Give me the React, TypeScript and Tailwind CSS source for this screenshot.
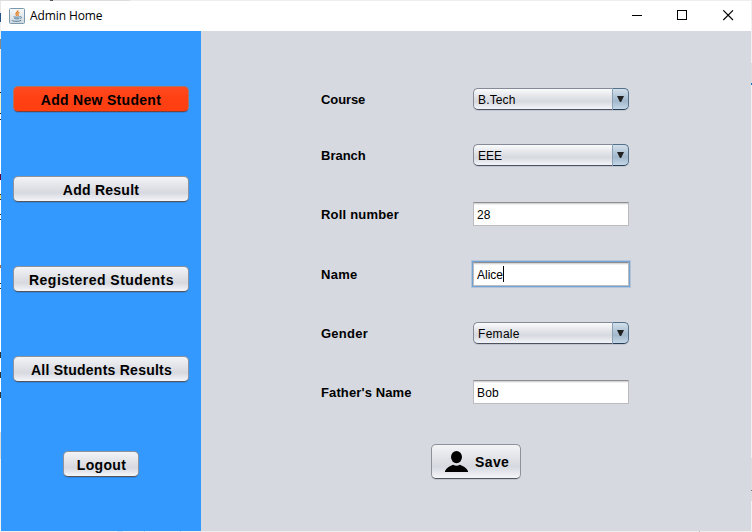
import React from "react";

type NavButton = { label: string; tracking: string; place: string; active?: boolean };

const NAV: NavButton[] = [
  { label: "Add New Student", tracking: "tracking-[0.3px]", place: "mt-[55px] w-44", active: true },
  { label: "Add Result", tracking: "tracking-[0.25px]", place: "mt-16 w-44" },
  { label: "Registered Students", tracking: "tracking-[0.46px] pl-px", place: "mt-16 w-44" },
  { label: "All Students Results", tracking: "tracking-[0.25px] pl-px", place: "mt-16 w-44" },
  { label: "Logout", tracking: "tracking-[0.35px] pl-px", place: "mt-[69px] w-[76px]" },
];

const SILVER =
  "bg-[linear-gradient(to_bottom,#f3f4f6_0%,#e6e8ec_28%,#dbdde3_55%,#d6d9df_66%,#e4e6ec_82%,#f5f6f9_100%)] border-[#8f9299] border-b-[#54565c]";
const ORANGE =
  "bg-[linear-gradient(to_bottom,#ff4a1f_0%,#ff4013_50%,#ff3f10_100%)] border-[#b0735f] border-b-[#7e4036]";

function JavaIcon() {
  return (
    <svg width="16" height="16" viewBox="0 0 16 16" fill="none">
      <defs>
        <linearGradient id="tile" x1="0" y1="0" x2="0" y2="1">
          <stop offset="0" stopColor="#f8fafb" />
          <stop offset="1" stopColor="#cfd8df" />
        </linearGradient>
      </defs>
      <rect x="0.5" y="0.5" width="15" height="15" rx="1" fill="url(#tile)" stroke="#7b98ad" />
      <path d="M8.8 2.2c.7 1.8-3.2 2.6-1.6 4.6l.6 1M10.4 4.4c-2 .8-2.1 1.6-1.2 2.5.3.5 0 .8-.4 1.1" stroke="#e5812b" strokeWidth="1.3" />
      <path d="M4.6 8.8c1.4.5 4.8.5 6.2 0M5.3 10.5c1.2.5 3.8.5 5 0M11 8.8c2.2-.5 1.6 1.5.2 1.9M3.3 12c-.5.7.6 1 1.4 1.1 2.5.4 6.1.2 7.5-.8" stroke="#527d9d" strokeWidth="1" />
    </svg>
  );
}

function TitleBar() {
  return (
    <header className="flex h-[30px] items-center bg-white pl-2 pr-[17px]">
      <JavaIcon />
      <span className="ml-[5px] font-['Open_Sans','Noto_Sans',sans-serif] text-[12px] leading-[30px] tracking-[-0.1px]">Admin Home</span>
      <svg className="ml-auto" width="102" height="12" viewBox="0 0 102 12" fill="none" stroke="#000" shapeRendering="crispEdges">
        <path d="M0 5.5H10" />
        <rect x="45.5" y="0.5" width="9" height="9" />
        <path d="M91.3 .3L101 10M101 .3L91.3 10" shapeRendering="auto" strokeWidth="1.1" />
      </svg>
    </header>
  );
}

function Sidebar() {
  return (
    <nav className="flex w-[200px] shrink-0 flex-col items-center bg-[#3399ff]">
      {NAV.map((b) => (
        <button
          key={b.label}
          className={`flex h-[26px] items-center justify-center rounded-[5px] border pt-px text-[14px] font-bold leading-none whitespace-nowrap shadow-[0_1px_0_rgba(30,60,100,0.2)] ${b.tracking} ${b.place} ${b.active ? ORANGE : SILVER}`}
        >
          {b.label}
        </button>
      ))}
    </nav>
  );
}

function Row({ label, gap, tracking, children }: { label: string; gap: string; tracking: string; children: React.ReactNode }) {
  return (
    <div className={`flex h-6 items-center ${gap}`}>
      <span className={`w-[152px] text-[13px] font-bold leading-none ${tracking}`}>{label}</span>
      {children}
    </div>
  );
}

function Combo({ value, tracking = "" }: { value: string; tracking?: string }) {
  return (
    <div className="flex h-[22px] w-[156px] rounded-[5px] shadow-[0_1px_0_#c1c5cf]">
      <div className={`flex flex-1 items-center rounded-l-[5px] border border-r-0 border-[#858a96] border-b-[#4d5260] bg-[linear-gradient(to_bottom,#fafbfc_0%,#e4e6ea_35%,#d6d9df_62%,#f2f4f9_100%)] pt-px pl-1 text-[12px] leading-none ${tracking}`}>
        {value}
      </div>
      <div className="flex w-[17px] items-center justify-center rounded-r-[5px] border border-[#54718c] border-b-[#273f55] border-l-[#8aa1b5] bg-[linear-gradient(to_bottom,#d3e0ea_0%,#b1c5d6_40%,#a2b8cb_60%,#c3d7e7_100%)]">
        <svg className="-mt-px mr-px" width="7" height="6" viewBox="0 0 7 6">
          <path d="M0 0H7L4.1 6H2.9Z" fill="#202020" />
        </svg>
      </div>
    </div>
  );
}

function Field({ value, focused = false, tracking = "" }: { value: string; focused?: boolean; tracking?: string }) {
  return (
    <div
      className={`flex h-6 w-[156px] items-center border border-[#bcbcc0] border-t-[#8d8e91] bg-white pl-[3px] text-[12px] leading-none ${tracking} ${
        focused
          ? "shadow-[inset_0_1px_0_#d5d5d7,inset_0_2px_0_#f1f1f2,0_0_0_1px_#74a3d2,0_0_0_2px_#b0c5dc]"
          : "shadow-[inset_0_1px_0_#d5d5d7,inset_0_2px_0_#f1f1f2]"
      }`}
    >
      <span className="pt-px">{value}</span>
      {focused && <i className="h-4 w-px bg-black" />}
    </div>
  );
}

function StudentForm() {
  return (
    <main className="flex flex-1 flex-col bg-[#d6d9e0] pl-[120px]">
      <Row label="Course" gap="mt-14" tracking="tracking-[-0.1px]"><Combo value="B.Tech" tracking="tracking-[0.15px]" /></Row>
      <Row label="Branch" gap="mt-8" tracking="tracking-normal"><Combo value="EEE" /></Row>
      <Row label="Roll number" gap="mt-[35px]" tracking="tracking-[0.2px]"><Field value="28" tracking="tracking-[0.2px]" /></Row>
      <Row label="Name" gap="mt-9" tracking="tracking-[0.3px]"><Field value="Alice" focused /></Row>
      <Row label="Gender" gap="mt-[35px]" tracking="tracking-[0.25px]"><Combo value="Female" tracking="tracking-[0.3px]" /></Row>
      <Row label="Father's Name" gap="mt-[35px]" tracking="tracking-[0.12px]"><Field value="Bob" tracking="tracking-[0.2px]" /></Row>
      <button className={`mt-10 ml-[110px] flex h-[35px] w-[90px] items-center rounded-[5px] border pl-[13px] shadow-[0_1px_0_#c1c5cf] ${SILVER}`}>
        <svg className="-mt-px" width="23" height="21" viewBox="0 0 23 21">
          <ellipse cx="11.5" cy="6.1" rx="5.5" ry="6.1" />
          <path d="M0 21V20C1.5 16.8 5.2 15 8.2 13.8Q11.5 15.6 14.8 13.8C17.8 15 21.5 16.8 23 20V21Z" />
        </svg>
        <span className="ml-[7px] pt-px text-[14px] font-bold leading-none tracking-[0.4px]">Save</span>
      </button>
    </main>
  );
}

export default function App() {
  return (
    <div className="grid h-[532px] w-[752px] grid-cols-[1px_750px_1px] grid-rows-[1px_530px_1px] overflow-hidden bg-[#eeeeee] font-['Liberation_Sans',Arial,sans-serif] text-black">
      <div className="col-span-3 bg-[linear-gradient(to_right,#dddddd_0_50px,#555555_50px_53px,#dddddd_53px_130px,#eeeeee_130px)]" />
      <div className="bg-[linear-gradient(to_bottom,#e8e8e8_0_12px,#24508a_12px_21px,#eeeeee_21px_38px,#888888_38px_48px,#eeeeee_48px_91px,#222222_91px_92px,#f5f2c8_92px_112px,#222222_112px_113px,#ffffff_113px_118px,#222222_118px_119px,#ffffff_119px_173px,#650040_173px_179px,#ffffff_179px_193px,#333333_193px_194px,#e8dc80_194px_198px,#333333_198px_199px,#ffffff_199px_213px,#333333_213px_214px,#ffffff_214px_218px,#333333_218px_219px,#ffffff_219px_264px,#a86a45_264px_267px,#ffffff_267px_282px,#333333_282px_283px,#ffffff_283px_287px,#333333_287px_288px,#ffffff_288px_351px,#333333_351px_357px,#ffffff_357px_371px,#333333_371px_377px,#ffffff_377px_391px,#333333_391px_397px,#ffffff_397px_431px,#dddddd_431px_458px,#f2f2f2_458px)]" />
      <div className="flex flex-col">
        <TitleBar />
        <div className="flex flex-1">
          <Sidebar />
          <StudentForm />
        </div>
      </div>
      <div className="bg-[linear-gradient(to_bottom,#f1f1f1_0_62px,#dddddd_62px_82px,#1d6fb8_82px_84px,#f1f1f1_84px_457px,#dddddd_457px_489px,#777777_489px_490px,#dddddd_490px_500px,#f1f1f1_500px)]" />
      <div className="col-span-3 bg-[linear-gradient(to_right,#eeeeee_0_117px,#d2dfed_117px_123px,#eeeeee_123px_144px,#c8d8e8_144px_145px,#eeeeee_145px_180px,#c8d8e8_180px_181px,#eeeeee_181px_699px,#bbbbbb_699px_700px,#eeeeee_700px)]" />
    </div>
  );
}
